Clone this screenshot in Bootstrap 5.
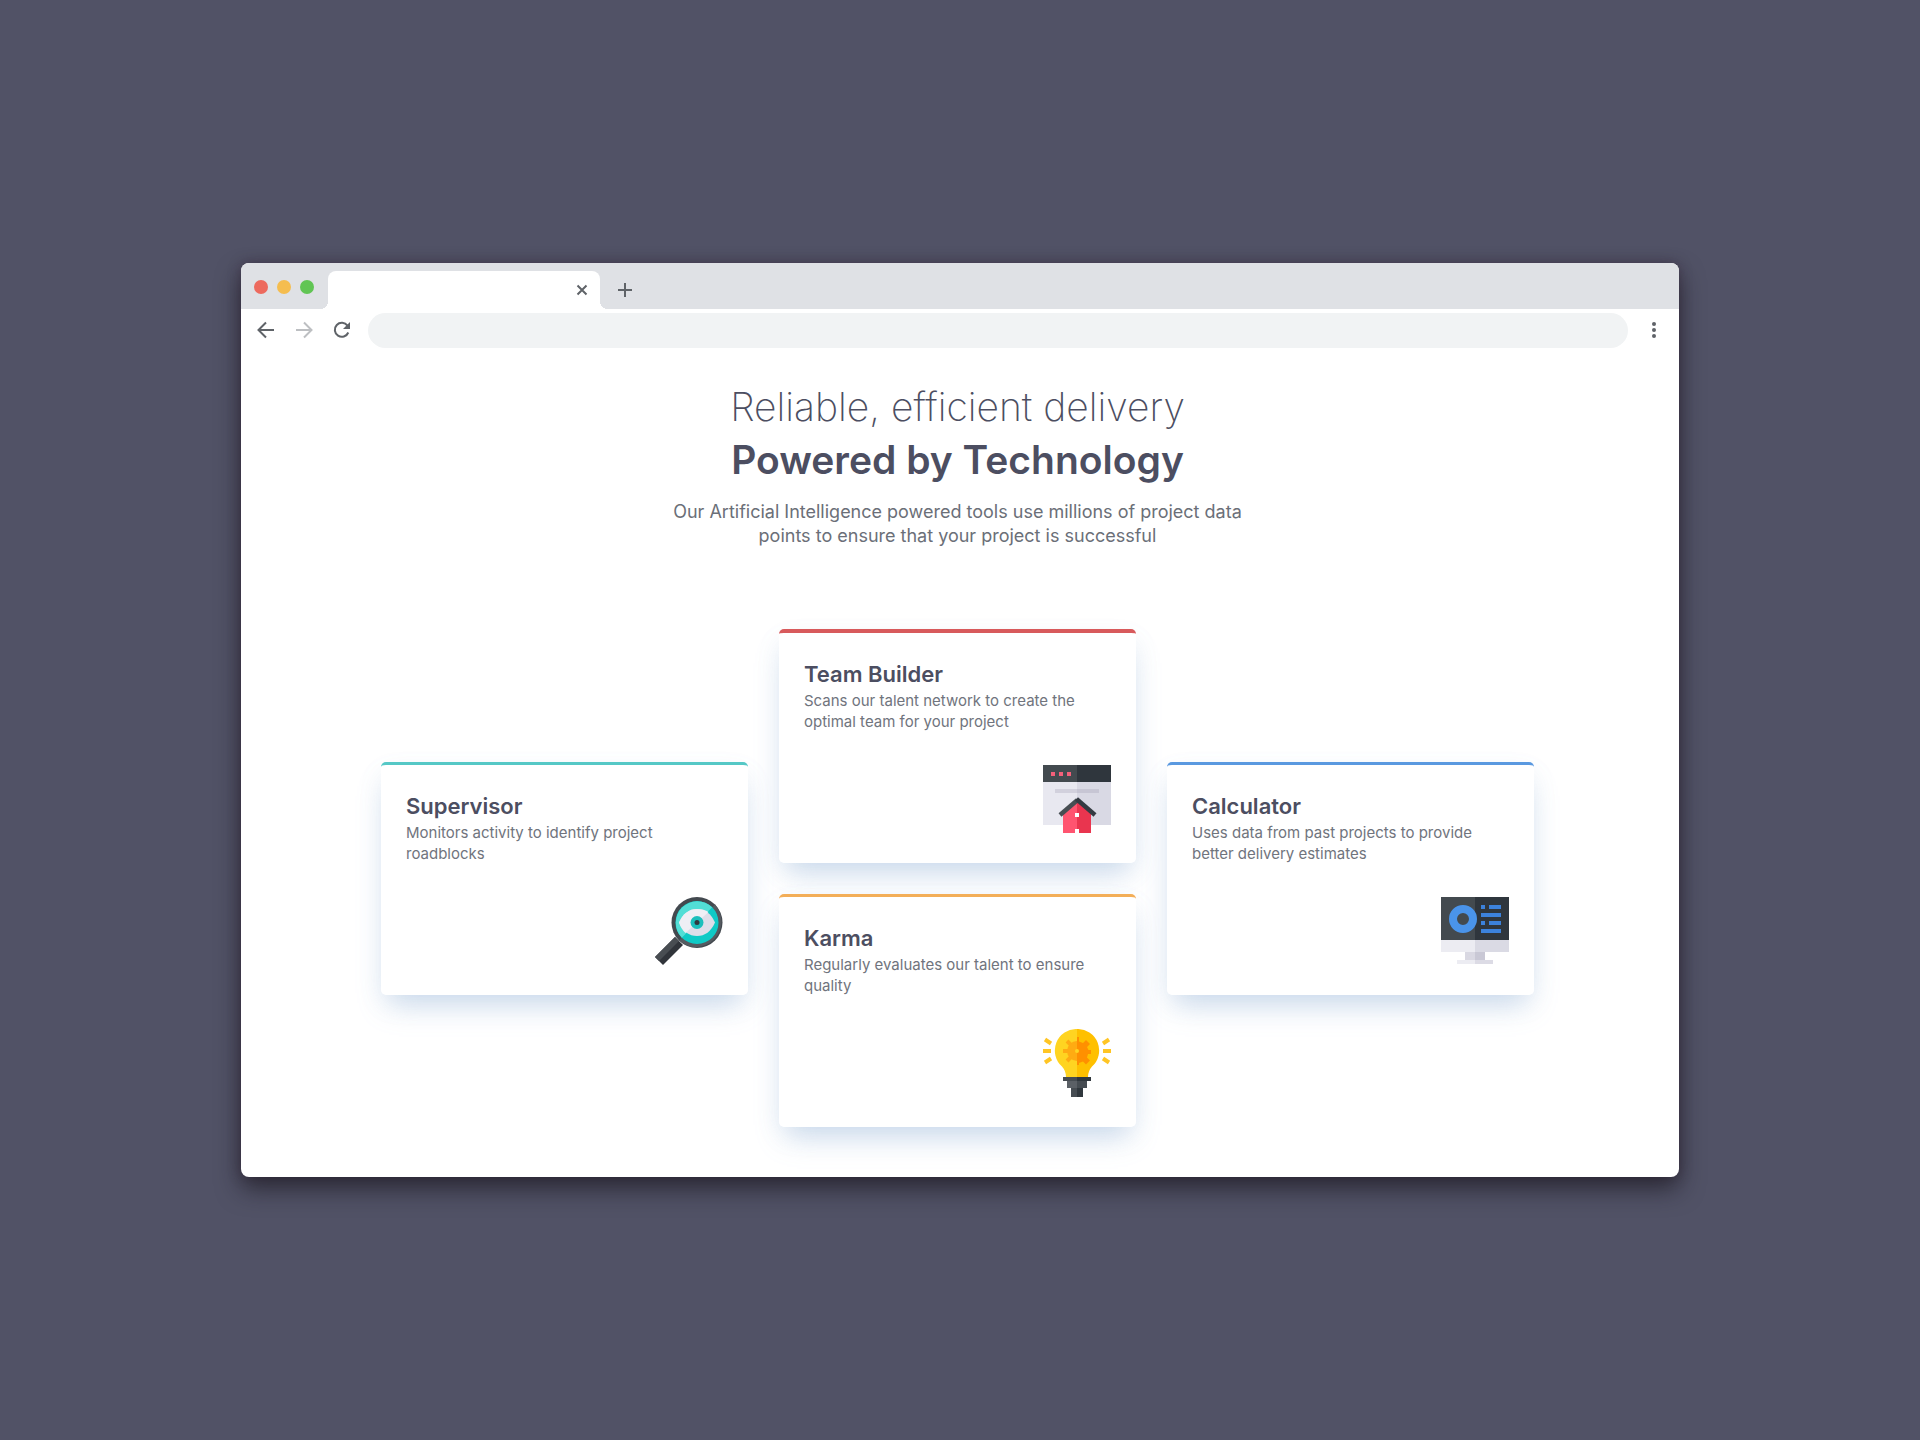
<!DOCTYPE html>
<html lang="en">
<head>
<meta charset="utf-8">
<meta name="viewport" content="width=device-width, initial-scale=1">
<title>Powered by Technology</title>
<link rel="stylesheet" href="https://cdn.jsdelivr.net/npm/bootstrap@5.3.0/dist/css/bootstrap.min.css">
<style>
  body { background: #515266; font-family: Inter, "Liberation Sans", sans-serif; color: #4c4e61; }
  .browser-window { width: 74.9%; background: #fff; border-radius: 8px; box-shadow: 0 12px 24px rgba(22,20,28,.62), 0 0 12px rgba(60,40,60,.5); }
  .tab-strip { background: #dfe1e5; height: 46px; padding-left: 13px; }
  .light { width: 14px; height: 14px; border-radius: 50%; }
  .light-red { background: #ed6a5e; } .light-amber { background: #f5bd4f; } .light-green { background: #61c554; }
  .lights { gap: 9px; padding-bottom: 15px; }
  .page-tab { position: relative; width: 272px; height: 38px; margin-left: 14px; background: #fff; border-radius: 8px 8px 0 0; padding-right: 10px; }
  .page-tab::before, .page-tab::after { content: ""; position: absolute; bottom: 0; width: 8px; height: 8px; }
  .page-tab::before { right: 100%; background: radial-gradient(circle at 0 0, transparent 8px, #fff 8px); }
  .page-tab::after { left: 100%; background: radial-gradient(circle at 100% 0, transparent 8px, #fff 8px); }
  .tool-btn { border: 0; background: none; padding: 0; color: #5f6368; display: flex; align-items: center; justify-content: center; }
  .tool-btn:disabled { color: #bdbfc2; }
  .toolbar { padding: 4px 13px; gap: 14px; }
  .toolbar .tool-btn { padding-bottom: 2px; }
  .address { height: 35px; border: 0; border-radius: 18px; background: #f1f3f4; padding: 0 16px; min-width: 0; }
  .page-body { padding: 28px 5px 50px 0; }
  .headline-thin, .headline-bold { line-height: 53px; margin: 0; }
  .headline-thin { font-size: 39px; font-weight: 200; }
  .headline-bold { font-size: 39px; font-weight: 600; }
  .intro { font-size: 18px; line-height: 24px; color: #6b6f78; max-width: 600px; margin: 14px auto 81px; }
  .tool-grid { width: 81%; max-width: 1153px; gap: 31px; }
  .side-col { flex: 367 1 0; min-width: 0; } .mid-col { flex: 357 1 0; min-width: 0; gap: 31px; }
  .tool-card { background: #fff; border-radius: 5px; border-top: 3px solid; padding: 27px 25px 30px; box-shadow: 0 16px 28px -8px rgba(131,166,210,.42), 0 10px 26px rgba(131,166,210,.08); }
  .edge-cyan { border-top-color: #55c8c6; } .edge-red { border-top-color: #d85a5c; border-top-width: 4px; }
  .edge-orange { border-top-color: #f3ae58; } .edge-blue { border-top-color: #5a99e0; }
  .tool-title { font-size: 22px; line-height: 28px; font-weight: 600; margin: 0 0 2px; }
  .tool-text { font-size: 15px; line-height: 21px; color: #70747d; margin: 0 0 33px; }
  .tool-card svg { width: 68px; height: 68px; display: block; }
</style>
</head>
<body class="min-vh-100 d-flex align-items-center justify-content-center">
<div class="browser-window overflow-hidden">
  <div class="tab-strip d-flex align-items-end">
    <div class="lights d-flex" aria-hidden="true">
      <span class="light light-red"></span><span class="light light-amber"></span><span class="light light-green"></span>
    </div>
    <div class="page-tab d-flex align-items-center justify-content-end">
      <button class="tool-btn" type="button" aria-label="Close tab"><svg width="16" height="16" viewBox="0 0 16 16" fill="none" stroke="currentColor" stroke-width="2"><path d="M3.500 3.500l9 9M12.500 3.500l-9 9"/></svg></button>
    </div>
    <button class="tool-btn h-100 ms-3 pt-2" type="button" aria-label="New tab"><svg width="18" height="18" viewBox="0 0 18 18" fill="none" stroke="currentColor" stroke-width="2"><path d="M9 2v14M2 9h14"/></svg></button>
  </div>
  <div class="toolbar d-flex align-items-center">
    <button class="tool-btn" type="button" aria-label="Back"><svg width="24" height="24" viewBox="0 0 24 24" fill="none" stroke="currentColor" stroke-width="2"><path d="M20 12H5M12 4.500L4.500 12l7.500 7.500"/></svg></button>
    <button class="tool-btn" type="button" aria-label="Forward" disabled><svg width="24" height="24" viewBox="0 0 24 24" fill="none" stroke="currentColor" stroke-width="2"><path d="M4 12h15M12 4.500l7.500 7.500-7.500 7.500"/></svg></button>
    <button class="tool-btn" type="button" aria-label="Reload"><svg width="24" height="24" viewBox="0 0 24 24" fill="none" stroke="currentColor" stroke-width="2"><path d="M18.300 14.500A7 7 0 1 1 17.500 7.700"/><path d="M20 4v7h-7z" fill="currentColor" stroke="none"/></svg></button>
    <input class="address flex-grow-1" type="text" aria-label="Address">
    <button class="tool-btn" type="button" aria-label="Menu"><svg width="24" height="24" viewBox="0 0 24 24" fill="currentColor"><circle cx="12" cy="6" r="2"/><circle cx="12" cy="12" r="2"/><circle cx="12" cy="18" r="2"/></svg></button>
  </div>

  <main class="page-body">
    <header class="text-center">
      <h1 class="headline-thin">Reliable, efficient delivery</h1>
      <h1 class="headline-bold">Powered by Technology</h1>
      <p class="intro">Our Artificial Intelligence powered tools use millions of project data<br>points to ensure that your project is successful</p>
    </header>

    <div class="tool-grid d-flex align-items-center mx-auto">
      <div class="side-col">
        <article class="tool-card edge-cyan">
          <h2 class="tool-title">Supervisor</h2>
          <p class="tool-text">Monitors activity to identify project<br>roadblocks</p>
          <svg class="ms-auto" viewBox="0 0 68 68" aria-hidden="true">
            <path d="M0 60L20 40l8 8L8 68z" fill="#30343a"/>
            <path d="M0 60L20 40l4 4L4 64z" fill="#484d52"/>
            <circle cx="42" cy="25.500" r="25.500" fill="#43494f"/>
            <path d="M60 7.500A25.500 25.500 0 0 1 24 43.500z" fill="#555a60"/>
            <circle cx="42" cy="25.500" r="21.500" fill="#0fcac6"/>
            <path d="M57.200 10.300A21.500 21.500 0 0 0 26.800 40.700z" fill="#52ded6"/>
            <path d="M24 25.500Q30 12 42 12T60 25.500Q54 39 42 39T24 25.500z" fill="#dedee9"/>
            <path d="M24 25.500Q30 12 42 12Q49 12 53.500 15L30.500 36Q26 32 24 25.500z" fill="#efeff5"/>
            <circle cx="42" cy="25.500" r="6.500" fill="#1bbfbc"/>
            <circle cx="42" cy="25.500" r="2.500" fill="#30383e"/>
          </svg>
        </article>
      </div>
      <div class="mid-col d-flex flex-column">
        <article class="tool-card edge-red">
          <h2 class="tool-title">Team Builder</h2>
          <p class="tool-text">Scans our talent network to create the<br>optimal team for your project</p>
          <svg class="ms-auto" viewBox="0 0 68 68" aria-hidden="true">
            <path d="M0 16h34v44H0z" fill="#e8e8f0"/><path d="M34 16h34v44H34z" fill="#d9d9e4"/>
            <path d="M0 0h34v17H0z" fill="#434a4f"/><path d="M34 0h34v17H34z" fill="#2f363d"/>
            <path d="M8 7h4v4H8zM16 7h4v4h-4zM24 7h4v4h-4z" fill="#f4607a"/>
            <path d="M12 24h22v4H12z" fill="#d2d1dd"/><path d="M34 24h22v4H34z" fill="#c7c6d4"/>
            <path d="M20 48l14-13v33H20z" fill="#ff5470"/><path d="M34 35l14 13v20H34z" fill="#e9354f"/>
            <path d="M17 50L34.500 35" stroke="#474e53" stroke-width="4.500"/><path d="M33.500 34L52 50" stroke="#343b42" stroke-width="4.500"/>
            <path d="M32 48h4v4h-4zM32 64h4v4h-4z" fill="#fff"/>
          </svg>
        </article>
        <article class="tool-card edge-orange">
          <h2 class="tool-title">Karma</h2>
          <p class="tool-text">Regularly evaluates our talent to ensure<br>quality</p>
          <svg class="ms-auto" viewBox="0 0 68 68" aria-hidden="true">
            <path d="M34 0A21.500 21.500 0 0 0 19 37.500Q23 42 23 48h11z" fill="#ffd421"/>
            <path d="M34 0A21.500 21.500 0 0 1 49 37.500Q45 42 45 48H34z" fill="#ffc000"/>
            <g fill="none" stroke="#ffab12" stroke-width="4"><path d="M34 22H20M34 22l-10-10M34 22L24 32"/></g>
            <path d="M34 12a10 10 0 0 0 0 20z" fill="#ffab12"/>
            <path d="M34 8h2v4.500l4 1.500 3-3 4 4-3 3 1.500 3H48v4h-3l-1 3.500 3 3-4 4-3-3-4 1.500V36h-2z" fill="#ff9000"/>
            <circle cx="34" cy="22" r="2" fill="#ffd421"/>
            <path d="M0 22h8M60 22h8M2 10.500l6 4M2 33.500l6-4M66 10.500l-6 4M66 33.500l-6-4" stroke="#ffc524" stroke-width="4"/>
            <path d="M20 48h14v4H20z" fill="#464c52"/><path d="M34 48h14v4H34z" fill="#30373d"/>
            <path d="M24 52h10v7H24z" fill="#5b6066"/><path d="M34 52h10v7H34z" fill="#464c52"/>
            <path d="M28 59h6v9h-6z" fill="#464c52"/><path d="M34 59h6v9h-6z" fill="#30373d"/>
          </svg>
        </article>
      </div>
      <div class="side-col">
        <article class="tool-card edge-blue">
          <h2 class="tool-title">Calculator</h2>
          <p class="tool-text">Uses data from past projects to provide<br>better delivery estimates</p>
          <svg class="ms-auto" viewBox="0 0 68 68" aria-hidden="true">
            <path d="M24 54h10v10H24z" fill="#d9d8e2"/><path d="M34 54h10v10H34z" fill="#c9c8d5"/>
            <path d="M16 63h18v4H16z" fill="#ececf2"/><path d="M34 63h18v4H34z" fill="#dcdbe5"/>
            <path d="M0 43h34v12H0z" fill="#ececf2"/><path d="M34 43h34v12H34z" fill="#dadae4"/>
            <path d="M0 0h34v43H0z" fill="#434a4f"/><path d="M34 0h34v43H34z" fill="#2f363d"/>
            <circle cx="22" cy="22" r="10" fill="none" stroke="#4a94ea" stroke-width="8"/>
            <path d="M40 8h4v4h-4zM48 8h12v4H48zM40 16h20v4H40zM40 24h4v4h-4zM48 24h12v4H48zM40 32h20v4H40z" fill="#3c82dc"/>
          </svg>
        </article>
      </div>
    </div>
  </main>
</div>
<script src="https://cdn.jsdelivr.net/npm/bootstrap@5.3.0/dist/js/bootstrap.bundle.min.js"></script>
</body>
</html>
